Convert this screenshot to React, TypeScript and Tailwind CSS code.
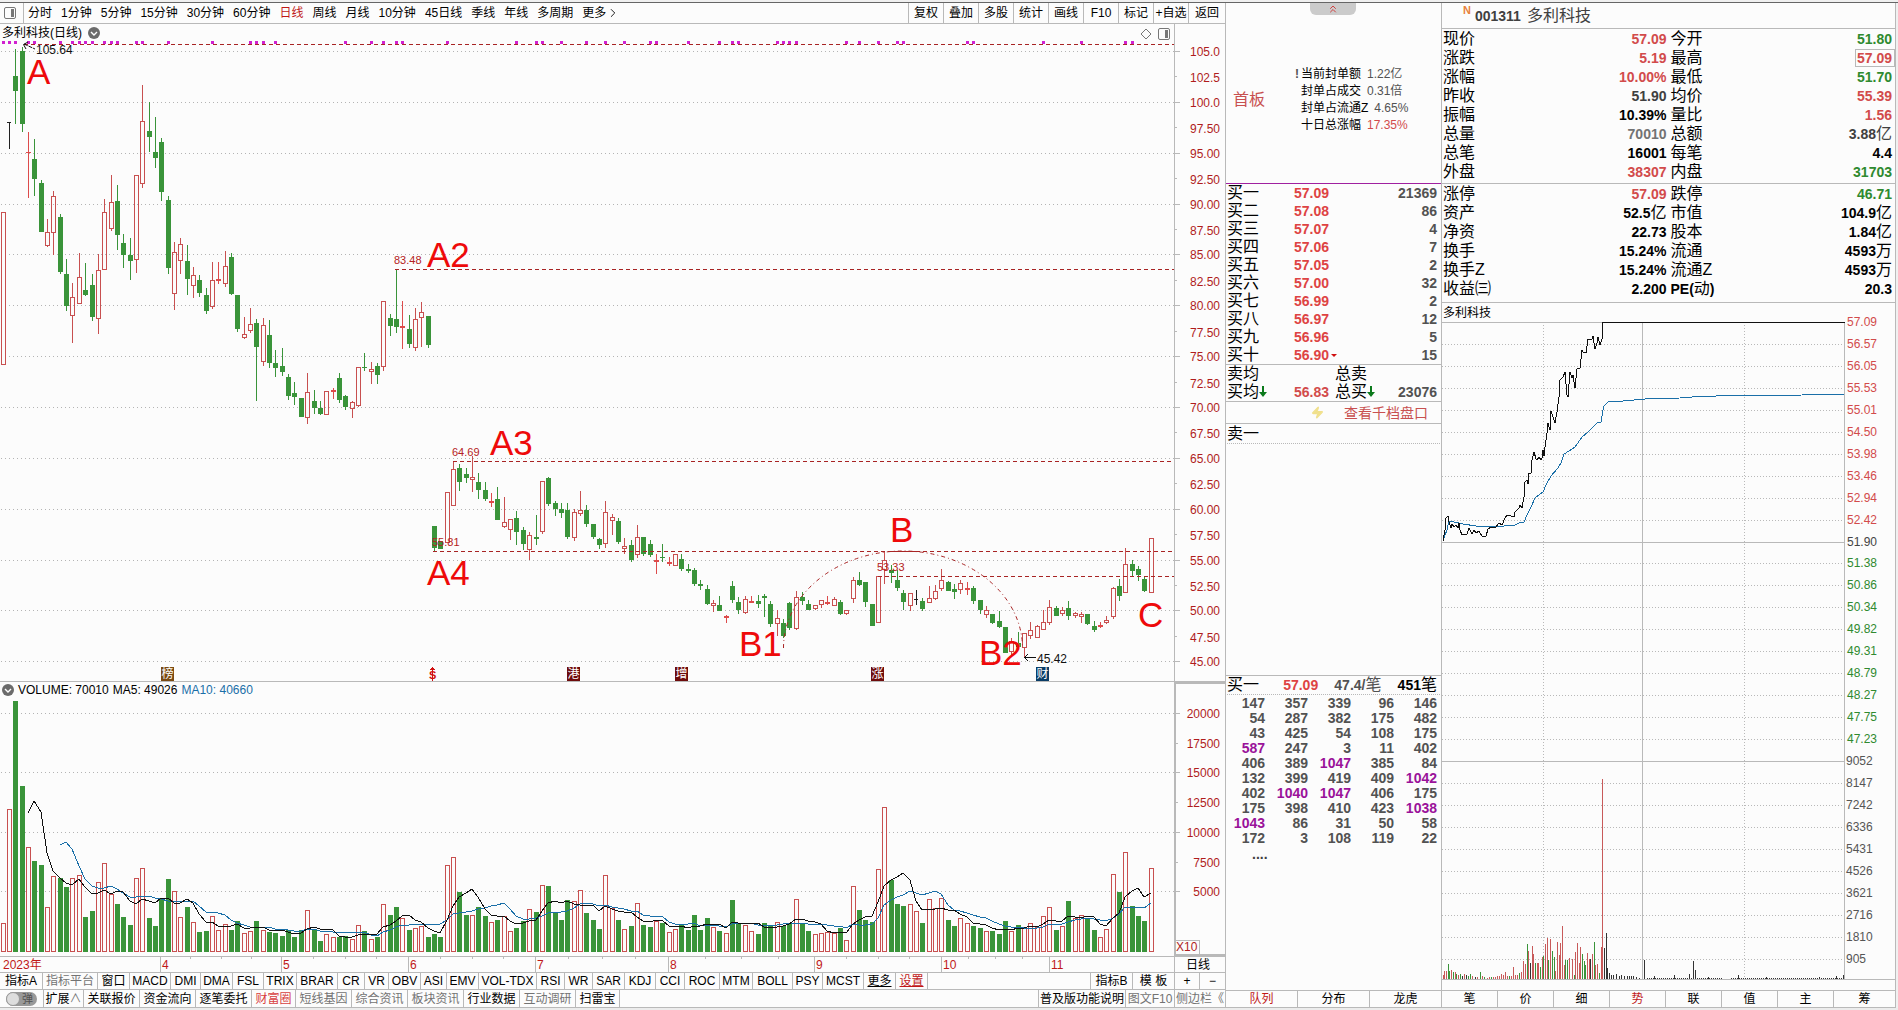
import React from "react";
import { ChevronRight, ChevronsUp, Zap } from "lucide-react";

const RED = "#c85050";
const GREEN = "#3a943a";
const LINE = "#b9b9b9";
const DASH = "#a82424";
const FONT = "'Liberation Sans','Noto Sans CJK SC',sans-serif";

/* One candle per trading day: kind, high, body top, body bottom, low.
   Levels are thirds of a pixel below the block's base line.
   r = hollow rise, f = flat rise, g = fall, k = unchanged */
type Candle = [string, number, number, number, number];
const BLOCKS: { base: number; rows: Candle[] }[] = [
  {
    base: -24,
    rows: [
      ["r", 636, 636, 1094, 1094], ["k", 367, 367, 369, 446], ["g", 147, 228, 272, 372], ["g", 140, 153, 372, 396],
      ["f", 396, 457, 459, 594], ["g", 417, 477, 537, 588], ["g", 540, 549, 695, 695], ["r", 657, 697, 738, 741],
      ["r", 573, 589, 698, 765], ["g", 642, 651, 816, 822], ["g", 777, 822, 918, 934], ["r", 849, 891, 947, 1029],
      ["r", 759, 832, 911, 911], ["g", 789, 870, 885, 888], ["g", 822, 855, 951, 963], ["r", 762, 811, 957, 1002],
      ["r", 597, 636, 809, 809], ["r", 525, 606, 687, 693], ["g", 555, 603, 705, 750], ["g", 702, 729, 766, 804],
      ["g", 714, 765, 783, 840], ["r", 526, 526, 780, 819], ["r", 255, 364, 551, 563], ["g", 306, 393, 411, 456],
      ["g", 351, 456, 474, 504], ["g", 414, 426, 576, 603], ["g", 588, 600, 804, 822], ["r", 726, 757, 882, 930],
      ["r", 714, 733, 783, 822], ["g", 735, 783, 837, 885], ["r", 801, 826, 857, 894], ["g", 825, 840, 879, 891],
      ["g", 864, 885, 933, 942], ["r", 786, 841, 921, 927], ["f", 786, 837, 843, 852], ["r", 753, 799, 852, 861],
      ["g", 759, 771, 882, 885], ["g", 885, 885, 987, 996], ["r", 951, 1003, 1014, 1017], ["r", 924, 973, 993, 999],
      ["g", 957, 969, 1041, 1203], ["r", 954, 976, 1086, 1098], ["g", 960, 1005, 1089, 1104], ["g", 1050, 1089, 1104, 1131],
      ["g", 1044, 1098, 1116, 1128], ["g", 1122, 1131, 1188, 1200], ["g", 1146, 1179, 1191, 1215], ["g", 1194, 1194, 1251, 1251],
      ["r", 1119, 1177, 1254, 1272], ["g", 1170, 1203, 1224, 1242], ["g", 1203, 1224, 1242, 1245], ["r", 1174, 1174, 1245, 1245],
      ["f", 1164, 1170, 1176, 1197], ["g", 1119, 1134, 1200, 1209], ["g", 1185, 1188, 1221, 1230], ["r", 1203, 1207, 1226, 1254],
      ["r", 1102, 1102, 1217, 1221], ["g", 1059, 1101, 1104, 1113], ["r", 1086, 1107, 1115, 1152], ["g", 1089, 1098, 1125, 1152],
      ["r", 904, 904, 1101, 1113], ["g", 942, 954, 978, 1008], ["g", 810, 957, 981, 999], ["f", 903, 978, 984, 1047],
      ["g", 945, 987, 1032, 1044], ["r", 924, 958, 1043, 1053], ["r", 906, 936, 954, 1041], ["g", 948, 948, 1035, 1044],
    ],
  },
  {
    base: 426,
    rows: [
      ["g", 228, 228, 294, 303], ["g", 274, 274, 297, 297], ["r", 127, 127, 278, 278], ["r", 36, 58, 167, 167],
      ["g", 42, 54, 96, 123], ["g", 54, 72, 84, 99], ["r", 18, 82, 89, 126], ["g", 69, 96, 120, 147],
      ["g", 96, 120, 147, 153], ["f", 129, 153, 159, 171], ["g", 111, 147, 210, 210], ["r", 141, 217, 231, 234],
      ["r", 208, 208, 239, 270], ["g", 183, 204, 246, 285], ["g", 231, 240, 282, 300], ["r", 246, 256, 299, 330],
      ["g", 195, 261, 267, 285], ["r", 94, 94, 245, 252], ["g", 81, 84, 162, 168], ["g", 153, 159, 177, 198],
      ["g", 159, 177, 189, 204], ["g", 159, 180, 261, 267], ["r", 177, 187, 263, 273], ["r", 123, 181, 191, 198],
      ["g", 165, 180, 222, 231], ["g", 222, 222, 261, 267], ["g", 264, 267, 285, 297], ["r", 153, 187, 281, 294],
      ["r", 192, 202, 212, 255], ["g", 204, 213, 276, 282], ["r", 264, 289, 296, 312], ["g", 270, 285, 330, 336],
      ["r", 225, 262, 314, 324], ["g", 261, 261, 312, 318], ["g", 270, 282, 315, 321], ["f", 312, 330, 336, 372],
      ["g", 282, 321, 324, 336], ["f", 321, 336, 342, 348], ["r", 313, 313, 347, 347], ["g", 312, 327, 357, 363],
      ["g", 342, 357, 363, 369], ["g", 354, 360, 402, 408], ["g", 390, 402, 408, 420], ["g", 405, 417, 462, 465],
      ["r", 450, 460, 467, 486], ["g", 438, 465, 483, 483], ["f", 495, 498, 504, 519], ["g", 393, 408, 450, 459],
      ["g", 441, 456, 480, 492], ["r", 438, 448, 488, 492], ["f", 438, 453, 459, 459], ["g", 435, 453, 462, 474],
      ["g", 432, 438, 444, 501], ["g", 453, 462, 522, 531], ["r", 480, 505, 521, 558], ["g", 507, 519, 558, 564],
      ["g", 456, 459, 534, 540], ["r", 423, 442, 536, 540], ["g", 426, 441, 453, 465], ["g", 450, 462, 480, 480],
      ["r", 466, 466, 476, 480],
    ],
  },
  {
    base: 476,
    rows: [
      ["r", 301, 301, 314, 325], ["f", 288, 306, 312, 315], ["r", 291, 298, 317, 317], ["g", 300, 306, 342, 345],
      ["r", 331, 331, 341, 345], ["r", 231, 241, 296, 308], ["g", 216, 240, 255, 258], ["g", 246, 246, 306, 321],
      ["g", 312, 312, 378, 378], ["r", 229, 229, 368, 368], ["r", 156, 181, 209, 252], ["g", 195, 210, 219, 249],
      ["g", 210, 240, 264, 273], ["g", 270, 279, 306, 330], ["r", 280, 280, 318, 333], ["k", 270, 297, 300, 315],
      ["g", 294, 303, 327, 333], ["r", 258, 295, 308, 308], ["r", 255, 274, 296, 300], ["r", 207, 241, 266, 273],
      ["g", 243, 246, 273, 273], ["g", 252, 267, 276, 297], ["r", 240, 250, 269, 282], ["f", 246, 264, 270, 285],
      ["g", 258, 264, 303, 312], ["g", 300, 300, 330, 342], ["r", 318, 331, 344, 354], ["g", 342, 342, 369, 372],
      ["g", 333, 363, 381, 384], ["g", 381, 381, 459, 459], ["r", 414, 424, 455, 465], ["g", 396, 429, 441, 441],
      ["r", 400, 400, 443, 474], ["r", 366, 391, 407, 417], ["r", 375, 379, 413, 413], ["r", 330, 367, 389, 389],
      ["r", 300, 322, 368, 375], ["g", 318, 324, 348, 348], ["r", 321, 331, 341, 348], ["g", 303, 324, 348, 360],
      ["r", 336, 340, 349, 354], ["r", 336, 343, 349, 368], ["g", 342, 342, 372, 375], ["g", 363, 378, 390, 396],
      ["f", 366, 375, 381, 384], ["r", 348, 361, 368, 372], ["r", 261, 265, 350, 357], ["g", 237, 258, 288, 303],
      ["r", 144, 193, 278, 278], ["g", 180, 192, 213, 228], ["g", 198, 207, 225, 243], ["g", 228, 237, 273, 276],
      ["r", 115, 115, 278, 278],
    ],
  },
];

const CANDLES: Candle[] = BLOCKS.flatMap((b) =>
  b.rows.map(([k, ...v]) => [k, ...v.map((n) => Math.round(b.base + n / 3))] as Candle),
);

/* Top edge of each volume bar, thirds of a pixel; the floor is 846. */
const VOLUME_TOPS = [
  760, 418, 93, 348, 532, 573, 585, 712, 619, 624, 651, 625, 616, 741, 723, 637, 580, 672, 702, 741, 765, 625, 595, 744,
  768, 687, 627, 664, 742, 711, 757, 786, 783, 739, 781, 763, 780, 753, 790, 784, 753, 781, 786, 789, 798, 780, 801, 780,
  721, 777, 813, 793, 802, 801, 798, 808, 766, 783, 808, 801, 703, 735, 711, 745, 780, 775, 769, 801, 792, 801, 586, 562,
  666, 735, 736, 711, 738, 757, 750, 739, 784, 774, 753, 718, 726, 646, 648, 726, 750, 690, 694, 661, 729, 750, 777, 616,
  715, 750, 778, 768, 700, 765, 771, 752, 759, 787, 778, 765, 780, 735, 780, 744, 771, 783, 790, 690, 759, 766, 784, 792,
  759, 765, 757, 768, 762, 688, 759, 783, 793, 790, 787, 790, 774, 811, 649, 720, 750, 756, 598, 412, 630, 702, 708, 703,
  723, 759, 688, 715, 685, 750, 768, 745, 760, 768, 774, 784, 783, 792, 753, 784, 765, 772, 760, 772, 739, 712, 780, 769,
  693, 745, 736, 744, 780, 802, 778, 613, 666, 547, 708, 738, 753, 595,
];

const EVENT_DAYS = [
  0, 1, 2, 4, 5, 9, 11, 12, 13, 14, 16, 17, 18, 21, 22, 26, 33, 39, 40, 41, 43, 54, 58, 60, 62, 63, 70, 81, 84, 85, 88,
  92, 95, 98, 102, 103, 108, 113, 115, 116, 122, 123, 124, 125, 133, 135, 138, 141, 142, 152, 153, 164, 170, 177, 178,
];

const dayX = (i: number) => Math.round(2.7 + i * 6.343);
const volY = (t: number) => Math.round(t / 3 - 12);

function average(days: number) {
  return VOLUME_TOPS.map((_, i) => {
    if (i < days - 1) return null;
    const sum = VOLUME_TOPS.slice(i - days + 1, i + 1).reduce((a, b) => a + b, 0);
    return `${dayX(i)},${volY(sum / days)}`;
  })
    .filter(Boolean)
    .join(" ");
}

const LEVELS: [number, number, string, number][] = [
  [395, 245, "83.48", 240],
  [453, 437, "64.69", 432],
  [433, 527, "55.81", 522],
  [878, 552, "53.33", 547],
];

const LETTERS: [string, number, number][] = [
  ["A", 27, 60], ["A2", 427, 243], ["A3", 490, 431], ["A4", 427, 561],
  ["B", 890, 518], ["B1", 739, 632], ["B2", 979, 641], ["C", 1138, 603],
];

const BADGES: [string, number, string][] = [
  ["榜", 161, "#7a4a12"], ["港", 567, "#6e0c0c"], ["增", 675, "#6e0c0c"], ["涨", 871, "#6e0c0c"], ["财", 1036, "#0a3c66"],
];

function PriceChart() {
  return (
    <svg className="block h-full w-full" fontFamily={FONT} shapeRendering="crispEdges" role="img" aria-label="日线走势">
      {Array.from({ length: 13 }, (_, i) => {
        const y = Math.round(27 + i * 50.85) + 0.5;
        return <line key={i} x1="1" x2="100%" y1={y} y2={y} stroke="#b4b4b4" strokeDasharray="1 3" />;
      })}
      {EVENT_DAYS.map((d) => (
        <rect key={d} x={dayX(d) - 1} y={17} width={3} height={3} fill="#d020d0" />
      ))}
      <line x1="24" x2="100%" y1="20.5" y2="20.5" stroke={DASH} strokeDasharray="4 3" />
      {CANDLES.map(([k, hi, top, bot, lo], i) => {
        const x = dayX(i);
        const color = k === "g" ? GREEN : k === "k" ? "#222" : k === "f" ? "#dd4b4b" : RED;
        if (k === "r") {
          return (
            <g key={i} fill="none" stroke={color}>
              <path d={`M${x + 0.5} ${hi}V${top}M${x + 0.5} ${bot}V${lo}`} />
              <rect x={x - 1.5} y={top + 0.5} width={4} height={Math.max(2, bot - top - 1)} />
            </g>
          );
        }
        return (
          <g key={i} fill={color}>
            <rect x={x} y={hi} width={1} height={lo - hi} />
            <rect x={x - 2} y={top} width={k === "k" ? 4 : 5} height={Math.max(1, bot - top)} />
          </g>
        );
      })}
      {LEVELS.map(([x, y, label, ty]) => (
        <g key={label}>
          <line x1={x} x2="100%" y1={y + 0.5} y2={y + 0.5} stroke={DASH} strokeDasharray="4 3" />
          <text x={x - 1} y={ty} fontSize="11" fill="#b42222">{label}</text>
        </g>
      ))}
      <path
        d="M783.5 624A119.5 97 0 0 1 1022.5 624"
        fill="none" stroke={DASH} strokeDasharray="4 3 1 3" shapeRendering="auto"
      />
      <path d="M888 527.500H918" stroke={DASH} />
      <g fill="none" stroke="#111" shapeRendering="auto">
        <path d="M24 20L35 25" strokeDasharray="4 1" />
        <path d="M28 18L23.500 20.500L26 25" />
        <path d="M1024 633.500H1036M1028 630L1024.500 633.500L1028 637" />
      </g>
      <text x="36" y="30" fontSize="12" fill="#111">105.64</text>
      <text x="1037" y="639" fontSize="12" fill="#111">45.42</text>
      {LETTERS.map(([t, x, y]) => (
        <text key={t} x={x} y={y} fontSize="35" fill="#ee0a0a">{t}</text>
      ))}
      {BADGES.map(([t, x, color]) => (
        <g key={t}>
          <rect x={x} y={643} width={13} height={14} fill={color} />
          <text x={x + 0.5} y={654} fontSize="12" fill="#fff">{t}</text>
        </g>
      ))}
      <text x="429" y="655" fontSize="11" fontWeight="bold" fill="#d01010">S</text>
      <path d="M432.500 643L435 646H430Z" fill="#d01010" />
      <path d="M432.500 646V657" stroke="#d01010" />
    </svg>
  );
}

const PRICES = [
  "105.0", "102.5", "100.0", "97.50", "95.00", "92.50", "90.00", "87.50", "85.00", "82.50", "80.00", "77.50", "75.00",
  "72.50", "70.00", "67.50", "65.00", "62.50", "60.00", "57.50", "55.00", "52.50", "50.00", "47.50", "45.00",
];

function PriceAxis() {
  return (
    <svg className="block h-full w-full" fontFamily={FONT} role="img" aria-label="价格坐标">
      {PRICES.map((p, i) => {
        const y = Math.round(27 + i * 25.425);
        return (
          <g key={p}>
            <rect x={0} y={y} width={i % 2 ? 2 : 5} height={1} fill={LINE} />
            <text x={45} y={y + (i % 2 ? 6 : 5)} fontSize="12" fill="#b01c1c" textAnchor="end">{p}</text>
          </g>
        );
      })}
    </svg>
  );
}

function VolumeChart() {
  return (
    <svg className="block h-full w-full" shapeRendering="crispEdges" role="img" aria-label="成交量">
      {[31, 90, 150, 209].map((y) => (
        <line key={y} x1="1" x2="100%" y1={y + 0.5} y2={y + 0.5} stroke="#b4b4b4" strokeDasharray="1 3" />
      ))}
      {VOLUME_TOPS.map((t, i) => {
        const x = dayX(i);
        const y = volY(t);
        const fall = CANDLES[i][0] === "g";
        return fall ? (
          <rect key={i} x={x - 2} y={y} width={5} height={270 - y} fill={GREEN} />
        ) : (
          <rect key={i} x={x - 1.5} y={y + 0.5} width={4} height={269 - y} fill="#fcfcfc" stroke={RED} />
        );
      })}
      <polyline points={average(10)} fill="none" stroke="#1a6fa8" />
      <polyline points={average(5)} fill="none" stroke="#111" />
    </svg>
  );
}

const MONTHS: [string, number][] = [
  ["4", 160], ["5", 281], ["6", 408], ["7", 535], ["8", 668], ["9", 814], ["10", 941], ["11", 1049],
];
const WEEKS = [190, 221, 251, 313, 345, 376, 440, 472, 503, 568, 602, 635, 705, 741, 778, 846, 878, 909, 968, 995, 1022];

function DateAxis() {
  return (
    <svg className="block h-full w-full" fontFamily={FONT} fontSize="12" fill="#c01818" role="img" aria-label="日期坐标">
      <text x="3" y="12">2023年</text>
      {WEEKS.map((x) => (
        <rect key={x} x={x} y={0} width={1} height={2} fill={LINE} />
      ))}
      {MONTHS.map(([m, x]) => (
        <g key={m}>
          <rect x={x} y={0} width={1} height={16} fill={LINE} />
          <text x={x + 2} y="12">{m}</text>
        </g>
      ))}
    </svg>
  );
}

const INTRADAY =
  "1,219 3,208 4,196 6,194 7,200 9,206 10,202 12,205 14,203 16,206 17,201 18,208 20,213 25,212 27,206 30,212 32,208 34,211 37,209 40,214 44,214 46,207 49,205 53,206 57,201 60,203 63,196 65,193 69,194 72,195 73,190 77,186 78,183 80,186 82,175 83,160 85,158 86,162 87,151 89,151 90,138 92,130 94,137 95,138 97,135 99,138 100,136 101,128 102,134 103,125 105,111 106,101 108,108 109,89 111,95 113,101 115,90 117,75 118,58 121,55 123,50 125,73 126,75 128,50 130,56 131,53 133,66 135,47 138,46 140,28 141,30 144,31 146,17 150,17 151,14 153,27 155,21 156,15 158,23 160,17 160,8 161,0 403,0";
const INTRADAY_AVG =
  "1,218 5,208 7,199 12,200 21,202 34,204 43,204 62,204 73,203 77,201 82,200 85,193 89,185 93,176 101,170 104,163 109,154 116,146 119,141 122,132 127,129 133,125 140,115 146,110 151,105 155,101 159,100 161,88 162,84 166,80 181,79 203,77 238,76 250,75 274,74 360,73 403,72";

/* Minute volume bars: x, height, colour */
const MINUTES: [number, number, string][] = [
  [2, 4, "r"], [3, 8, "r"], [5, 8, "r"], [7, 15, "g"], [8, 8, "g"], [10, 9, "r"], [12, 7, "g"], [14, 7, "r"], [15, 5, "g"],
  [17, 4, "r"], [19, 5, "g"], [21, 3, "k"], [23, 5, "r"], [25, 4, "k"], [27, 3, "g"], [29, 5, "g"], [31, 3, "r"],
  [34, 2, "k"], [36, 2, "r"], [39, 7, "g"], [41, 3, "r"], [43, 2, "g"], [46, 1, "r"], [48, 2, "r"], [50, 2, "g"], [52, 2, "r"],
  [54, 2, "r"], [56, 3, "r"], [58, 3, "r"], [60, 5, "r"], [62, 4, "r"], [64, 7, "r"], [66, 3, "r"], [68, 3, "g"], [70, 3, "r"],
  [72, 12, "r"], [74, 4, "r"], [76, 4, "r"], [78, 6, "g"], [80, 7, "r"], [82, 18, "r"], [84, 15, "r"], [86, 35, "g"],
  [87, 28, "r"], [89, 16, "k"], [91, 33, "r"], [92, 25, "r"], [94, 16, "g"], [96, 16, "r"], [97, 16, "r"], [99, 12, "g"],
  [101, 22, "r"], [102, 23, "g"], [104, 35, "r"], [106, 41, "r"], [107, 19, "g"], [109, 40, "r"], [111, 28, "g"],
  [113, 22, "g"], [114, 8, "r"], [116, 37, "r"], [118, 24, "r"], [119, 36, "r"], [121, 53, "r"], [123, 14, "r"],
  [124, 19, "g"], [126, 19, "g"], [128, 21, "r"], [131, 20, "r"], [133, 4, "g"], [134, 27, "r"], [136, 36, "r"],
  [138, 16, "r"], [139, 32, "r"], [141, 25, "g"], [143, 18, "g"], [144, 14, "g"], [146, 26, "r"], [148, 20, "r"],
  [149, 20, "k"], [151, 25, "r"], [153, 37, "g"], [154, 14, "r"], [156, 15, "r"], [158, 6, "g"], [160, 32, "r"],
  [161, 200, "r"], [163, 31, "k"], [165, 46, "k"], [166, 11, "k"], [168, 6, "k"], [170, 4, "k"], [172, 4, "k"],
  [175, 5, "k"], [178, 3, "k"], [180, 4, "k"], [183, 3, "k"], [186, 3, "k"], [188, 3, "k"], [190, 3, "k"], [192, 3, "k"],
  [195, 2, "k"], [198, 1, "k"], [203, 19, "k"], [213, 3, "k"], [233, 4, "k"], [248, 5, "k"], [252, 18, "k"],
  [254, 9, "k"], [267, 2, "k"], [297, 4, "k"], [325, 2, "k"], [378, 2, "k"], [395, 3, "k"], [402, 4, "k"],
];
const QUIET = Array.from({ length: 98 }, (_, i) => 205 + i * 2).filter((x) => x < 281 || x > 287);
const BAR_COLORS: Record<string, string> = { r: "#c85a5a", g: GREEN, k: "#333" };

const SIDE_LABELS = [
  "57.09", "56.57", "56.05", "55.53", "55.01", "54.50", "53.98", "53.46", "52.94", "52.42", "51.90", "51.38", "50.86",
  "50.34", "49.82", "49.31", "48.79", "48.27", "47.75", "47.23", "9052", "8147", "7242", "6336", "5431", "4526", "3621",
  "2716", "1810", "905",
];

function IntradayChart() {
  return (
    <svg className="block h-[669px] w-full overflow-visible" fontFamily={FONT} shapeRendering="crispEdges" role="img" aria-label="分时走势">
      {SIDE_LABELS.map((t, i) => {
        const y = Math.round(i * 21.95) + 1;
        const solid = i === 0 || i === 10 || i === 20;
        const color = i < 10 ? "#d24b4b" : i === 10 ? "#444" : i < 20 ? "#2f8a2f" : "#555";
        return (
          <g key={t}>
            <line x1="0" x2="402" y1={y + 0.5} y2={y + 0.5} stroke={LINE} strokeDasharray={solid ? undefined : "1 2"} />
            <text x={i < 20 ? 405 : 404} y={y + 4} fontSize="12" fill={color}>{t}</text>
          </g>
        );
      })}
      <g stroke={LINE}>
        <path d="M101.500 1V658M302.500 1V658" strokeDasharray="1 2" />
        <path d="M200.500 1V658M402.500 1V658M0 658.500H454" />
      </g>
      {QUIET.map((x) => (
        <rect key={x} x={x} y={657} width={1} height={1} fill="#333" />
      ))}
      {MINUTES.map(([x, h, c], i) => (
        <rect key={i} x={x - 1} y={658 - h} width={1} height={h} fill={BAR_COLORS[c]} />
      ))}
      <polyline points={INTRADAY_AVG} transform="translate(0 1)" fill="none" stroke="#1a6fa8" />
      <polyline points={INTRADAY} transform="translate(0 1)" fill="none" stroke="#111" />
    </svg>
  );
}

const PERIODS = [
  "分时", "1分钟", "5分钟", "15分钟", "30分钟", "60分钟", "日线", "周线", "月线", "10分钟", "45日线", "季线", "年线", "多周期",
];
const ACTIONS = ["复权", "叠加", "多股", "统计", "画线", "F10", "标记", "+自选", "返回"];

const INDICATORS: [string, string][] = [
  ["指标A", "w-[43px]"], ["指标平台", "w-[55px] text-neutral-500"], ["窗口", "w-8"], ["MACD", "w-[41px]"], ["DMI", "w-[30px]"],
  ["DMA", "w-8"], ["FSL", "w-[31px]"], ["TRIX", "w-[33px]"], ["BRAR", "w-[41px]"], ["CR", "w-[27px]"], ["VR", "w-6"],
  ["OBV", "w-8"], ["ASI", "w-[26px]"], ["EMV", "w-8"], ["VOL-TDX", "w-[58px]"], ["RSI", "w-7"], ["WR", "w-7"],
  ["SAR", "w-8"], ["KDJ", "w-[31px]"], ["CCI", "w-[29px]"], ["ROC", "w-[35px]"], ["MTM", "w-[33px]"], ["BOLL", "w-10"],
  ["PSY", "w-[30px]"], ["MCST", "w-[41px]"], ["更多", "w-8 underline"], ["设置", "w-8 text-[#c01818] underline"],
];
const LINKS: [string, string][] = [
  ["关联报价", "w-14"], ["资金流向", "w-14"], ["逐笔委托", "w-14"], ["财富圈", "w-11 text-[#d84040]"],
  ["短线基因", "w-14 text-neutral-500"], ["综合资讯", "w-14 text-neutral-500"], ["板块资讯", "w-14 text-neutral-500"],
  ["行业数据", "w-14"], ["互动调研", "w-14 text-neutral-500"], ["扫雷宝", "w-11"],
];

function Cell({ label, extra }: { label: string; extra: string }) {
  return (
    <button type="button" className={`h-full shrink-0 whitespace-nowrap border-r border-[#b9b9b9] text-center ${extra}`}>
      {label}
    </button>
  );
}

function SplitIcon() {
  return (
    <svg width="12" height="12" viewBox="0 0 12 12" fill="none" aria-hidden="true">
      <rect x="0.500" y="0.500" width="11" height="11" rx="1.500" stroke="#777" />
      <rect x="7" y="2" width="3" height="8" fill="#777" />
    </svg>
  );
}

function RoundArrow() {
  return (
    <svg width="12" height="12" viewBox="0 0 12 12" aria-hidden="true">
      <circle cx="6" cy="6" r="6" fill="#6b6b6b" />
      <path d="M3 5L6 8L9 5" stroke="#fff" strokeWidth="1.400" fill="none" />
    </svg>
  );
}

function ChartPane() {
  return (
    <section className="flex min-w-0 flex-1 flex-col border-r border-[#b9b9b9] text-xs leading-4">
      <nav className="flex h-[21px] items-stretch border-b border-[#b9b9b9]">
        <button type="button" aria-label="布局" className="flex w-6 items-center border-r border-[#b9b9b9] pl-1">
          <SplitIcon />
        </button>
        <div className="flex flex-1 items-center gap-[9px] overflow-hidden whitespace-nowrap pl-1">
          {PERIODS.map((p) => (
            <button key={p} type="button" className={p === "日线" ? "text-[#c01818]" : ""}>{p}</button>
          ))}
          <button type="button" className="flex items-center">更多<ChevronRight size={14} strokeWidth={1.5} /></button>
        </div>
        {ACTIONS.map((a) => (
          <button key={a} type="button" className="w-[35px] border-l border-[#b9b9b9] text-center last:w-[37px]">{a}</button>
        ))}
      </nav>
      <div className="flex h-[658px] border-b border-[#b9b9b9]">
        <div className="relative min-w-0 flex-1">
          <PriceChart />
          <div className="absolute left-0.5 top-0 flex h-[18px] items-center gap-1.5">
            <span>多利科技(日线)</span>
            <RoundArrow />
          </div>
          <div className="absolute right-1 top-0.5 flex h-4 items-center gap-1.5">
            <svg width="12" height="12" viewBox="0 0 12 12" fill="none" aria-hidden="true">
              <path d="M6 1L11 6L6 11L1 6Z" stroke="#777" />
            </svg>
            <SplitIcon />
          </div>
        </div>
        <div className="w-[51px] border-l border-[#b9b9b9]"><PriceAxis /></div>
      </div>
      <div className="flex h-[275px] border-b border-[#b9b9b9]">
        <div className="relative min-w-0 flex-1">
          <VolumeChart />
          <div className="absolute left-0.5 top-0 flex h-4 items-center gap-1">
            <RoundArrow />
            <span>VOLUME: 70010</span>
            <span>MA5: 49026</span>
            <span className="text-[#1a6fa8]">MA10: 40660</span>
          </div>
        </div>
        <div className="relative w-[51px] border-2 border-r-0 border-[#b9b9b9] text-[#b01c1c]">
          <svg className="block h-full w-full" fontFamily={FONT} fontSize="12" fill="#b01c1c" role="img" aria-label="成交量坐标">
            {["20000", "17500", "15000", "12500", "10000", "7500", "5000"].map((t, i) => {
              const y = Math.round(29 + i * 29.7);
              return (
                <g key={t}>
                  <rect x={0} y={y} width={i % 2 ? 2 : 4} height={1} fill={LINE} />
                  <text x={44} y={y + 5} textAnchor="end">{t}</text>
                </g>
              );
            })}
          </svg>
          <span className="absolute bottom-0 left-0 h-3.5 border-r border-t border-[#b9b9b9] pr-0.5 leading-[13px]">X10</span>
        </div>
      </div>
      <div className="flex h-4 border-b border-[#b9b9b9]">
        <div className="min-w-0 flex-1"><DateAxis /></div>
        <div className="w-[51px] border-l border-[#b9b9b9] pr-1 text-center">日线</div>
      </div>
      <div className="flex h-[17px] border-b border-[#b9b9b9]">
        {INDICATORS.map(([l, w]) => <Cell key={l} label={l} extra={w} />)}
        <div className="flex-1 border-r border-[#b9b9b9]" />
        <Cell label="指标B" extra="w-[42px]" />
        <Cell label="模 板" extra="w-[42px]" />
        <Cell label="+" extra="w-[25px]" />
        <button type="button" className="w-[25px]">−</button>
      </div>
      <div className="flex h-[18px] border-b border-[#b9b9b9]">
        <label className="flex w-11 items-center border-r border-[#b9b9b9] pl-1.5">
          <input type="checkbox" className="peer sr-only" />
          <span className="flex h-3.5 w-[31px] items-center justify-between rounded-full bg-[#999] pr-1 text-[11px] text-neutral-600">
            <i className="block size-3.5 rounded-full border border-[#999] bg-[#ddd]" />弹
          </span>
        </label>
        <button type="button" className="w-10 whitespace-nowrap border-r border-[#b9b9b9]">
          扩展<span className="text-neutral-500">∧</span>
        </button>
        {LINKS.map(([l, w]) => <Cell key={l} label={l} extra={w} />)}
        <div className="flex-1 border-r border-[#b9b9b9]" />
        <Cell label="普及版功能说明" extra="w-[87px]" />
        <Cell label="图文F10" extra="w-[49px] text-neutral-500" />
        <button type="button" className="w-[50px] whitespace-nowrap text-neutral-500">侧边栏《</button>
      </div>
    </section>
  );
}

const BIDS: [string, string, string][] = [
  ["买一", "57.09", "21369"], ["买二", "57.08", "86"], ["买三", "57.07", "4"], ["买四", "57.06", "7"], ["买五", "57.05", "2"],
  ["买六", "57.00", "32"], ["买七", "56.99", "2"], ["买八", "56.97", "12"], ["买九", "56.96", "5"], ["买十", "56.90", "15"],
];
const QUEUE = [
  [147, 357, 339, 96, 146], [54, 287, 382, 175, 482], [43, 425, 54, 108, 175], [587, 247, 3, 11, 402],
  [406, 389, 1047, 385, 84], [132, 399, 419, 409, 1042], [402, 1040, 1047, 406, 175], [175, 398, 410, 423, 1038],
  [1043, 86, 31, 50, 58], [172, 3, 108, 119, 22],
];
const LIMIT_INFO: [string, string, string][] = [
  ["当前封单额", "1.22亿", "text-neutral-600"], ["封单占成交", "0.31倍", "text-neutral-600"],
  ["封单占流通Z", "4.65%", "text-neutral-600"], ["十日总涨幅", "17.35%", "text-[#d24b4b]"],
];

function DownArrow() {
  return (
    <svg width="8" height="11" viewBox="0 0 8 11" className="inline-block align-baseline" aria-hidden="true">
      <path d="M3 0H5V6H8L4 11L0 6H3Z" fill="#0c7a1c" />
    </svg>
  );
}

function OrderPane() {
  return (
    <section className="flex w-[216px] shrink-0 flex-col border-r border-[#b9b9b9]">
      <div className="flex h-[181px] flex-col border-b border-[#a020a0]">
        <button type="button" aria-label="收起" className="ml-[84px] flex h-3 w-[46px] items-center justify-center rounded-b-md bg-[#cbcbcb] text-[#d04040]">
          <ChevronsUp size={12} strokeWidth={2} />
        </button>
        <div className="flex flex-1 items-center pl-[7px] pt-0.5">
          <span className="w-[62px] text-base text-[#c85050]">首板</span>
          <div className="flex items-start gap-0.5 text-xs leading-[17px]">
            <span className="font-bold text-neutral-600">!</span>
            <dl>
              {LIMIT_INFO.map(([k, v, c]) => (
                <div key={k} className="flex gap-1.5"><dt>{k}</dt><dd className={c}>{v}</dd></div>
              ))}
            </dl>
          </div>
        </div>
      </div>
      <table className="w-full table-fixed border-b border-[#b9b9b9]">
        <tbody>
          {BIDS.map(([n, p, v]) => (
            <tr key={n} className="h-[18px] text-sm font-bold leading-[18px]">
              <th scope="row" className="w-[60px] p-0 pl-px text-left text-base font-normal leading-[18px]">{n}</th>
              <td className="w-[43px] p-0 text-right text-[#de4343]">{p}</td>
              <td className="w-3 p-0">
                {n === "买十" && (
                  <svg width="6" height="3" viewBox="0 0 6 3" className="ml-0.5" aria-hidden="true"><path d="M0 0H6L3 3Z" fill="#d01010" /></svg>
                )}
              </td>
              <td className="p-0 pr-1 text-right text-neutral-600">{v}</td>
            </tr>
          ))}
        </tbody>
      </table>
      <table className="w-full table-fixed border-b border-[#b9b9b9]">
        <tbody>
          <tr className="h-[18px] leading-[18px]">
            <th scope="row" className="w-[60px] p-0 pl-px text-left font-normal">卖均</th>
            <td className="w-[43px] p-0" />
            <th scope="row" className="w-[56px] p-0 pl-1.5 text-left font-normal">总卖</th>
            <td className="p-0" />
          </tr>
          <tr className="h-[18px] leading-[18px]">
            <th scope="row" className="whitespace-nowrap p-0 pl-px text-left font-normal">买均<DownArrow /></th>
            <td className="p-0 text-right text-sm font-bold leading-[18px] text-[#d24b4b]">56.83</td>
            <th scope="row" className="whitespace-nowrap p-0 pl-1.5 text-left font-normal">总买<DownArrow /></th>
            <td className="p-0 pr-1 text-right text-sm font-bold leading-[18px] text-neutral-600">23076</td>
          </tr>
        </tbody>
      </table>
      <div className="flex h-[22px] items-center justify-end gap-5 border-b border-[#b9b9b9] pr-[13px]">
        <Zap size={13} fill="#f0e08c" stroke="#f0e08c" />
        <a href="#depth" className="text-sm text-[#c85050]">查看千档盘口</a>
      </div>
      <div className="mx-px flex h-5 items-center border-b border-dotted border-[#b9b9b9] leading-[18px]">卖一</div>
      <div className="flex-1" />
      <div className="h-[315px] border-t border-[#b9b9b9]">
        <div className="mx-px flex h-[19px] items-center justify-between border-b border-dotted border-[#b9b9b9] pr-[3px] text-sm font-bold leading-[18px]">
          <span className="text-base font-normal">买一</span>
          <span className="pl-2 text-[#de4343]">57.09</span>
          <span className="text-neutral-600">47.4/<span className="text-base font-normal">笔</span></span>
          <span>451<span className="text-base font-normal">笔</span></span>
        </div>
        <table className="mt-px w-full table-fixed">
          <tbody>
            {QUEUE.map((row, i) => (
              <tr key={i} className="h-[15px] text-sm font-bold leading-[15px]">
                {row.map((n, j) => (
                  <td key={j} className={n > 500 ? "p-0 pr-1 text-right text-[#9a129a]" : "p-0 pr-1 text-right text-neutral-600"}>{n}</td>
                ))}
              </tr>
            ))}
          </tbody>
        </table>
        <p className="pl-[26px] text-sm font-bold leading-4 text-neutral-700">....</p>
      </div>
      <nav className="flex h-[18px] border-y border-[#b9b9b9] text-xs leading-4">
        <button type="button" className="flex-1 border-r border-[#b9b9b9] text-[#c01818]">队列</button>
        <button type="button" className="flex-1 border-r border-[#b9b9b9]">分布</button>
        <button type="button" className="flex-1">龙虎</button>
      </nav>
    </section>
  );
}

const R = "text-[#d24b4b]";
const G = "text-[#2f8a2f]";
const K = "text-black";
const D = "text-neutral-700";
type Quote = [string, string, string, string, string, string];
const QUOTE_A: Quote[] = [
  ["现价", "57.09", R, "今开", "51.80", G], ["涨跌", "5.19", R, "最高", "57.09", R], ["涨幅", "10.00%", R, "最低", "51.70", G],
  ["昨收", "51.90", D, "均价", "55.39", R], ["振幅", "10.39%", K, "量比", "1.56", R], ["总量", "70010", "text-neutral-500", "总额", "3.88亿", D],
  ["总笔", "16001", K, "每笔", "4.4", K], ["外盘", "38307", R, "内盘", "31703", G],
];
const QUOTE_B: Quote[] = [
  ["涨停", "57.09", R, "跌停", "46.71", G], ["资产", "52.5亿", K, "市值", "104.9亿", K], ["净资", "22.73", K, "股本", "1.84亿", K],
  ["换手", "15.24%", K, "流通", "4593万", K], ["换手Z", "15.24%", K, "流通Z", "4593万", K], ["收益㈢", "2.200", K, "PE(动)", "20.3", K],
];

function Value({ text }: { text: string }) {
  const unit = /[亿万]$/.test(text) ? text.slice(-1) : "";
  return <>{unit ? text.slice(0, -1) : text}{unit && <span className="text-base font-normal leading-[18px]">{unit}</span>}</>;
}

function QuoteTable({ rows }: { rows: Quote[] }) {
  return (
    <table className="w-full table-fixed">
      <tbody>
        {rows.map(([a, v, c, b, w, d]) => (
          <tr key={a} className="h-[19px] text-sm font-bold leading-[18px]">
            <th scope="row" className="p-0 pl-px text-left text-base font-normal leading-[18px]">{a}</th>
            <td className={`p-0 pr-0.5 text-right ${c}`}><Value text={v} /></td>
            <th scope="row" className="p-0 pl-0.5 text-left text-base font-normal leading-[18px]">
              {b === "PE(动)" ? <><span className="text-sm font-bold">PE(</span>动<span className="text-sm font-bold">)</span></> : b}
            </th>
            <td className={`p-0 text-right ${d}`}>
              <span className={b === "最高" ? "inline-block border border-[#b9b9b9] pl-px pr-0.5 leading-4" : "pr-[3px]"}><Value text={w} /></span>
            </td>
          </tr>
        ))}
      </tbody>
    </table>
  );
}

function QuotePane() {
  return (
    <section className="flex w-[454px] shrink-0 flex-col border-r border-[#b9b9b9]">
      <h1 className="flex h-[26px] items-center border-b border-[#b9b9b9] pl-[21px] text-base text-neutral-700">
        <sup className="text-[11px] font-bold text-[#e8823c]">N</sup>
        <span className="pl-1 pr-1.5 text-sm font-bold">001311</span>
        多利科技
      </h1>
      <QuoteTable rows={QUOTE_A} />
      <div className="mt-0.5 border-y border-[#b9b9b9] pb-[3px]"><QuoteTable rows={QUOTE_B} /></div>
      <h2 className="h-[18px] pl-px text-xs leading-5">多利科技</h2>
      <IntradayChart />
      <nav className="flex h-[18px] border-y border-[#b9b9b9] text-xs leading-4">
        {["笔", "价", "细", "势", "联", "值", "主"].map((t) => (
          <button key={t} type="button" className={t === "势" ? "w-14 border-r border-[#b9b9b9] text-[#c01818]" : "w-14 border-r border-[#b9b9b9]"}>{t}</button>
        ))}
        <button type="button" className="flex-1">筹</button>
      </nav>
    </section>
  );
}

export default function App() {
  return (
    <main className="min-h-screen bg-[#fcfcfc] font-['Liberation_Sans','Noto_Sans_CJK_SC',sans-serif] text-base text-black">
      <div className="h-[3px] border-b border-[#666] bg-[#f0f0f0]" />
      <div className="flex items-stretch">
        <ChartPane />
        <OrderPane />
        <QuotePane />
        <div className="w-0.5 bg-[#f0f0f0]" />
      </div>
      <div className="h-0.5 bg-[#ececec]" />
    </main>
  );
}
